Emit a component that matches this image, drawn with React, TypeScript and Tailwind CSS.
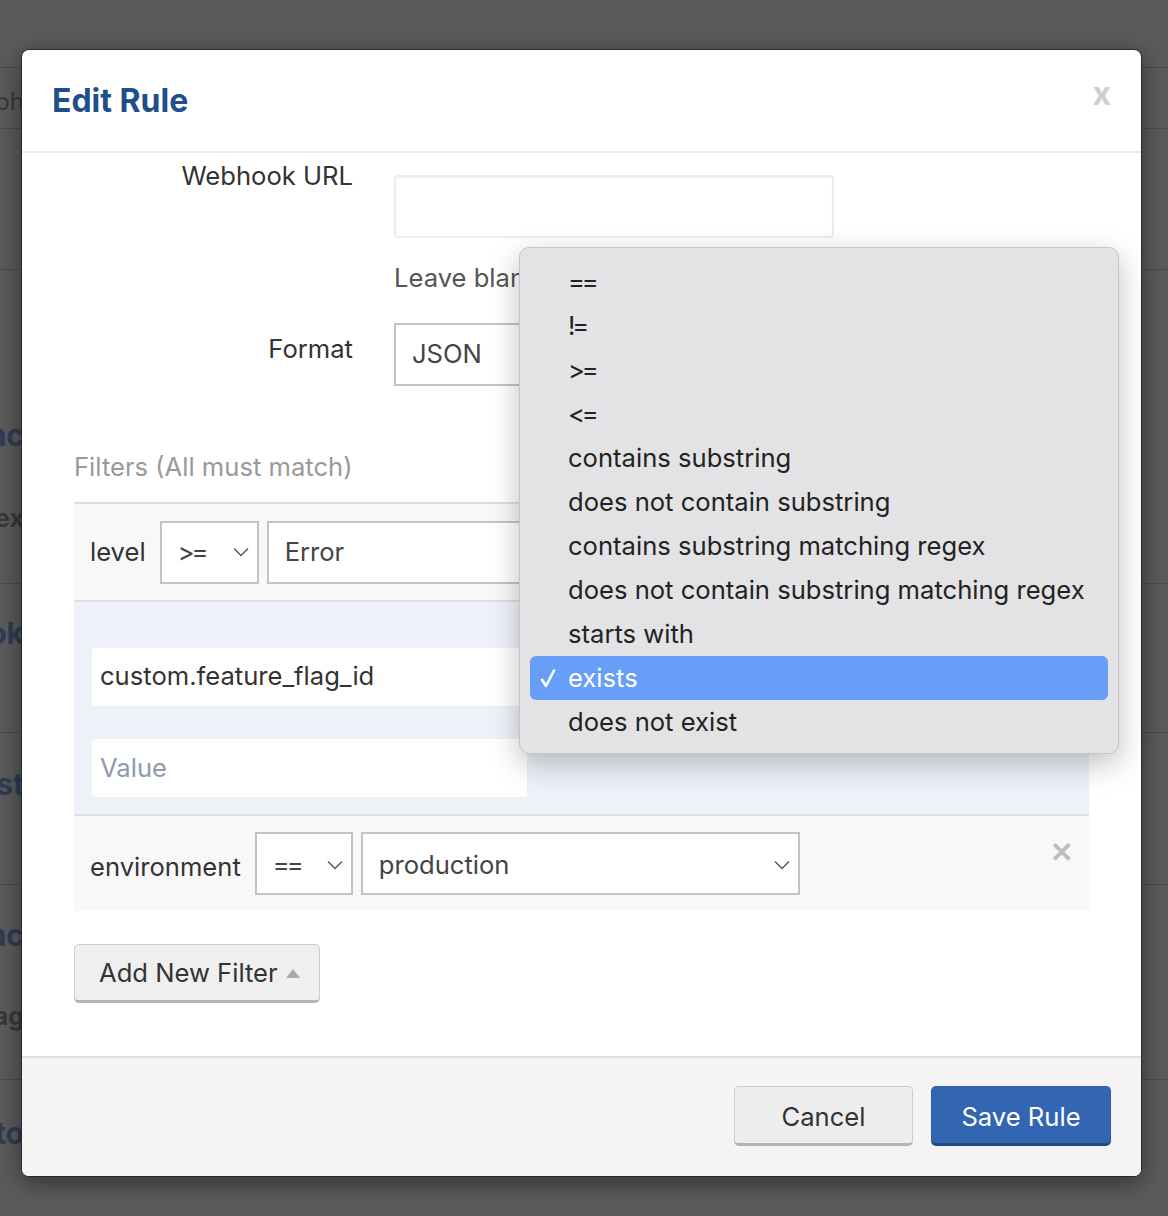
import React from "react";

const ops = [
  "==",
  "!=",
  ">=",
  "<=",
  "contains substring",
  "does not contain substring",
  "contains substring matching regex",
  "does not contain substring matching regex",
  "starts with",
  "exists",
  "does not exist",
];

const isSymbol = (s: string) => /^[=!<>]+$/.test(s);

function Chevron({ className = "" }: { className?: string }) {
  return (
    <svg viewBox="0 0 16 10" className={`h-[10px] w-[16px] ${className}`} fill="none">
      <polyline points="1,1.5 8,8.5 15,1.5" stroke="#555" strokeWidth="1.4" />
    </svg>
  );
}

function Select({ value, className }: { value: string; className: string }) {
  return (
    <div className={`flex h-[63px] items-center justify-between border-2 border-[#c3c3c3] bg-white pl-[16px] pr-[8px] text-[#444] ${className}`}>
      <span className={isSymbol(value) ? "tracking-[-0.12em]" : ""}>{value}</span>
      <Chevron />
    </div>
  );
}

function BgRow({ h, text, y }: { h: string; text?: string; y?: string }) {
  return (
    <div className={`border-t border-[#4b4b4b] ${h}`}>
      {text ? (
        <div className={`flex w-[24px] justify-end whitespace-nowrap text-[24px] text-[#393939] ${y}`}>{text}</div>
      ) : null}
    </div>
  );
}

function Frag({ text, mt, bold }: { text: string; mt: string; bold?: boolean }) {
  return (
    <div className={`flex w-[24px] justify-end whitespace-nowrap font-bold ${mt} ${bold ? "text-[30px] text-[#2f3c55]" : "text-[25px] text-[#383838]"}`}>
      {text}
    </div>
  );
}

export default function App() {
  return (
    <div className="relative h-[1216px] w-[1168px] overflow-hidden bg-[#5b5b5b] font-['Inter','Noto_Sans',sans-serif]">
      {/* page behind the overlay */}
      <div className="flex flex-col pt-[67px]">
        <BgRow h="h-[61px]" text="Graph" y="pt-[16px]" />
        <BgRow h="h-[141px]" />
        <BgRow h="h-[314px]" />
        <BgRow h="h-[149px]" />
        <BgRow h="h-[152px]" />
        <BgRow h="h-[195px]" />
        <BgRow h="h-[137px]" />
      </div>
      <div className="absolute left-0 top-[413px] flex flex-col">
        <Frag text="Sync" mt="mt-0" bold />
        <Frag text="Index" mt="mt-[42px]" />
        <Frag text="Hook" mt="mt-[73px]" bold />
        <Frag text="Post" mt="mt-[106px]" bold />
        <Frag text="Sync" mt="mt-[106px]" bold />
        <Frag text="Flag" mt="mt-[40px]" />
        <Frag text="Auto" mt="mt-[76px]" bold />
      </div>

      {/* modal */}
      <div className="absolute left-[21px] top-[49px] flex h-[1128px] w-[1121px] flex-col overflow-hidden rounded-[8px] border border-[#2a2a2a] bg-white shadow-[0_6px_24px_rgba(0,0,0,0.45)]">
        <div className="flex h-[103px] shrink-0 items-start justify-between border-b-2 border-[#ececec] pl-[30px] pr-[30px]">
          <h1 className="mt-[31px] text-[32px] font-bold leading-[40px] text-[#1f4e8d]">Edit Rule</h1>
          <span className="mt-[24px] text-[32px] font-bold leading-[40px] text-[#cfcfcf]">x</span>
        </div>

        <div className="flex flex-1 flex-col px-[52px] text-[25.6px] text-[#333]">
          <div className="grid grid-cols-[279px_1fr] gap-x-[41px] pt-[22px]">
            <div className="-mt-[14px] text-right leading-[30px]">Webhook URL</div>
            <div>
              <div className="h-[63px] w-[440px] rounded-[4px] border-2 border-[#ececec] bg-white shadow-[inset_0_1px_2px_rgba(0,0,0,0.05)]" />
              <div className="mt-[25px] leading-[30px] text-[#555]">Leave blank to use the default endpoint.</div>
            </div>
            <div className="mt-[30px] pt-[11px] text-right leading-[30px]">Format</div>
            <div className="mt-[30px]">
              <Select value="JSON" className="w-[440px] text-[#333]" />
            </div>
          </div>

          <div className="mt-[66px] leading-[30px] text-[#999]">Filters (All must match)</div>

          <div className="mt-[20px] flex flex-col border-t-2 border-[#dedede]">
            <div className="flex h-[96px] items-center gap-[8px] bg-[#f8f8f8] pl-[16px]">
              <span className="mr-[6px] text-[#333]">level</span>
              <Select value=">=" className="w-[99px]" />
              <Select value="Error" className="w-[439px]" />
            </div>
            <div className="flex flex-col gap-[30px] border-t-2 border-[#dedede] bg-[#eef1f8] pb-[16px] pl-[17px] pt-[43px]">
              <div className="flex items-center gap-[8px]">
                <div className="flex h-[60px] w-[437px] items-center rounded-[4px] border border-[#eef0f4] bg-white px-[8px] text-[#333]">custom.feature_flag_id</div>
                <Select value="exists" className="w-[200px]" />
              </div>
              <div className="flex h-[60px] w-[437px] items-center rounded-[4px] border border-[#eef0f4] bg-white px-[8px] text-[#8d9aad]">Value</div>
            </div>
            <div className="flex h-[97px] items-start gap-[8px] border-t-2 border-[#dedede] bg-[#f8f8f8] pl-[16px] pr-[16px] pt-[16px]">
              <span className="mr-[6px] mt-[16px] text-[#333]">environment</span>
              <Select value="==" className="w-[98px] pt-[3px]" />
              <Select value="production" className="w-[439px] pt-[3px]" />
              <span className="ml-auto mt-[5px] text-[28px] font-bold leading-[30px] text-[#bdbdbd]">✕</span>
            </div>
          </div>

          <div className="mt-[33px]">
            <button type="button" className="flex h-[59px] w-[246px] items-center gap-[8px] rounded-[5px] border border-b-[3px] border-[#cccccc] border-b-[#b4b4b4] bg-[#efefef] pl-[24px] pt-[2px] text-[#333]">
              Add New Filter
              <svg viewBox="0 0 14 9" className="h-[9px] w-[14px]">
                <polygon points="7,0 14,9 0,9" fill="#aaa" />
              </svg>
            </button>
          </div>
        </div>

        <div className="flex h-[120px] shrink-0 items-start justify-end gap-[18px] border-t-2 border-[#dedede] bg-[#f4f4f4] pr-[30px] pt-[28px] text-[25.6px]">
          <button type="button" className="h-[60px] w-[179px] rounded-[5px] border border-b-[3px] border-[#cccccc] border-b-[#b4b4b4] bg-[#eeeeee] pt-[4px] text-[#333]">Cancel</button>
          <button type="button" className="h-[60px] w-[180px] rounded-[5px] border border-b-[3px] border-[#2d5da5] border-b-[#234a86] bg-[#3366b2] pt-[4px] text-white">Save Rule</button>
        </div>
      </div>

      {/* native select menu */}
      <div className="absolute left-[519px] top-[247px] flex w-[600px] flex-col rounded-[10px] border border-[#c4c4c6] bg-[#e3e3e5] px-[10px] pb-[9px] pt-[12px] shadow-[0_10px_30px_rgba(0,0,0,0.25)]">
        {ops.map((op) => {
          const on = op === "exists";
          return (
            <div key={op} className={`flex h-[44px] items-center rounded-[6px] text-[25.6px] ${on ? "bg-[#679ef7] text-white" : "text-[#222]"}`}>
              <span className="flex w-[38px] justify-start pl-[10px]">
                {on ? (
                  <svg viewBox="0 0 16 20" className="h-[20px] w-[16px]" fill="none">
                    <polyline points="1.5,11 6,18 14.5,1.5" stroke="white" strokeWidth="2.6" strokeLinejoin="round" />
                  </svg>
                ) : null}
              </span>
              <span className={isSymbol(op) ? "tracking-[-0.12em]" : ""}>{op}</span>
            </div>
          );
        })}
      </div>
    </div>
  );
}
